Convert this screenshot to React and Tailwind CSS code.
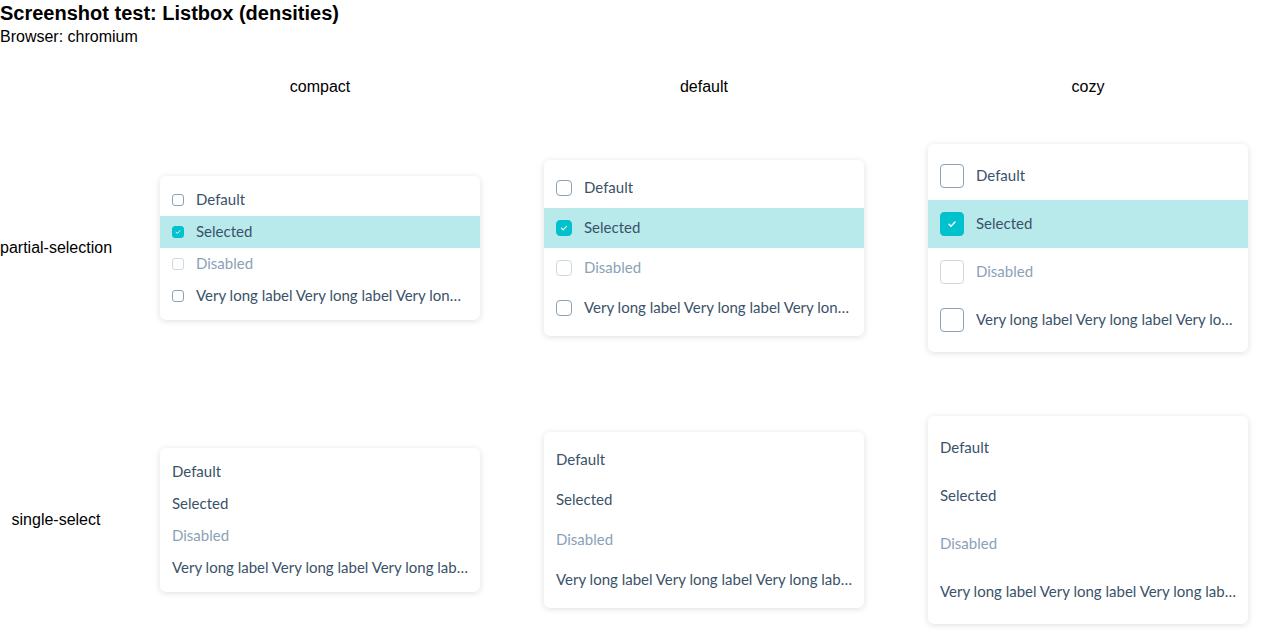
import React from "react";

const items = [
  { label: "Default", state: "default" },
  { label: "Selected", state: "selected" },
  { label: "Disabled", state: "disabled" },
  { label: "Very long label Very long label Very long label Very long label", state: "default" },
];

const dens = {
  compact: { h: "h-[32px]", box: "w-[12px] h-[12px] rounded-[3px]", check: 8 },
  default: { h: "h-[40px]", box: "w-[16px] h-[16px] rounded-[4px]", check: 10 },
  cozy: { h: "h-[48px]", box: "w-[24px] h-[24px] rounded-[4px]", check: 12 },
};

function Check({ size }) {
  return (
    <svg width={size} height={size} viewBox="0 0 12 12" fill="none">
      <path d="M3 6.2l2 2 4-4.2" stroke="white" strokeWidth="1.4" strokeLinecap="round" strokeLinejoin="round" />
    </svg>
  );
}

function Listbox({ density, checkbox }) {
  const d = dens[density];
  return (
    <div className="w-[320px] bg-white rounded-[6px] py-[8px] shadow-[0_1px_6px_rgba(0,0,0,0.13)] font-['Lato',sans-serif] text-[15px]">
      {items.map((it, i) => {
        const sel = it.state === "selected";
        const dis = it.state === "disabled";
        return (
          <div
            key={i}
            className={`${d.h} flex items-center px-[12px] gap-[12px] ${sel && checkbox ? "bg-[#b8e9eb]" : ""} ${dis ? "text-[#8aa2b7]" : "text-[#3a5269]"}`}
          >
            {checkbox && (
              <span
                className={`${d.box} shrink-0 flex items-center justify-center border ${
                  sel ? "bg-[#00c1cc] border-[#00c1cc]" : dis ? "border-[#cdd8e1] bg-white" : "border-[#8ea2b4] bg-white"
                }`}
              >
                {sel && <Check size={d.check} />}
              </span>
            )}
            <span className="truncate pb-[2px]">{it.label}</span>
          </div>
        );
      })}
    </div>
  );
}

export default function App() {
  const cols = ["compact", "default", "cozy"];
  return (
    <div className="w-full overflow-hidden bg-white font-['Liberation_Sans',Arial,sans-serif] text-black">
      <div className="h-[64px] pt-[2px]">
        <h1 className="text-[20px] font-bold leading-[23px]">Screenshot test: Listbox (densities)</h1>
        <div className="text-[16px] leading-[18px] mt-[3px]">Browser: chromium</div>
      </div>
      <div className="w-[1280px]">
        <div className="flex h-[48px] items-center">
          <div className="w-[128px] shrink-0" />
          {cols.map((c) => (
            <div key={c} className="w-[384px] shrink-0 text-center text-[16px] pb-[2px]">{c}</div>
          ))}
        </div>
        {[
          { label: "partial-selection", checkbox: true },
          { label: "single-select", checkbox: false },
        ].map((r) => (
          <div key={r.label} className="flex h-[272px] items-center">
            <div className="w-[112px] mr-[16px] shrink-0 text-center text-[16px] whitespace-nowrap">{r.label}</div>
            {cols.map((c) => (
              <div key={c} className="w-[384px] shrink-0 flex justify-center">
                <Listbox density={c} checkbox={r.checkbox} />
              </div>
            ))}
          </div>
        ))}
      </div>
    </div>
  );
}
